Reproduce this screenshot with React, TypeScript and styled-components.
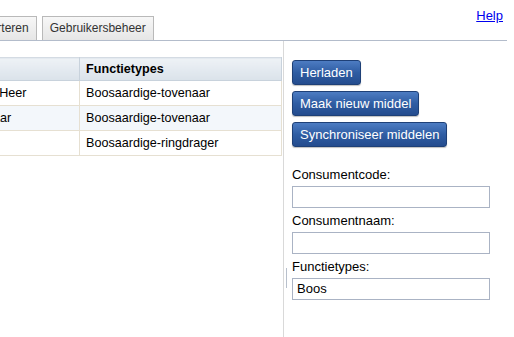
import React from 'react';
import styled, { createGlobalStyle } from 'styled-components';

const GlobalStyle = createGlobalStyle`
    html, body {
        margin:0;
        padding:0;
        background:#fff;
        overflow:hidden;
    }
    body {
        font-family:"Liberation Sans", Arial, sans-serif;
        font-size:13px;
        color:#000;
    }
`
const Page = styled.div`
    width:514px;
    height:337px;
    display:flex;
    flex-direction:column;
    overflow:hidden;
`
const TopBar = styled.div`
    height:40px;
    width:507px;
    border-bottom:1px solid #b3bccb;
    display:flex;
    justify-content:space-between;
    align-items:flex-start;
`
const Tabs = styled.div`
    display:flex;
    gap:5px;
    align-self:flex-end;
    margin-left:-38px;
`
const Tab = styled.div`
    height:23px;
    padding:0 7px;
    border:1px solid #b9b9b9;
    border-bottom:none;
    background:linear-gradient(#f7f7f7, #e6e6e6);
    font-size:12px;
    line-height:23px;
    color:#333;
`
const HelpLink = styled.a`
    margin-top:8px;
    margin-right:4px;
    color:#0000ee;
    text-decoration:underline;
    line-height:16px;
`
const Main = styled.div`
    flex:1;
    display:flex;
`
const LeftPanel = styled.div`
    width:283px;
    padding-top:16px;
    overflow:hidden;
    border-right:1px solid #d9d9d9;
`
const Grid = styled.table`
    margin-left:-40px;
    border-collapse:collapse;
    width:322px;
    font-size:12.6px;
`
const HeadCell = styled.th<{ w: number }>`
    width:${props => props.w}px;
    height:22px;
    padding:0 6px;
    text-align:left;
    font-weight:bold;
    background:linear-gradient(#eef2f6, #dae2ea);
    border:1px solid #c8d2dc;
    border-top-color:#d4dbe3;
`
const Row = styled.tr<{ alt?: boolean }>`
    background:${props => props.alt ? '#f3f7fb' : '#fff'};
`
const Cell = styled.td`
    height:24px;
    padding:0 6px;
    white-space:nowrap;
    border:1px solid #e6e0d2;
    border-top:none;
`
const RightPanel = styled.div`
    position:relative;
    flex:1;
    padding:19px 8px 0 8px;
    display:flex;
    flex-direction:column;
    align-items:flex-start;
    &::before{
        content:'';
        position:absolute;
        left:2px;
        top:227px;
        width:1px;
        height:20px;
        background:#b8c0cc;
    }
`
const Button = styled.button`
    height:25px;
    padding:0 7px;
    margin-bottom:6px;
    border:1px solid #1e4077;
    border-radius:3px;
    background:linear-gradient(#4d7cc2, #2f5da3 50%, #244c8e);
    box-shadow:0 1px 1px rgba(0,0,0,0.25);
    color:#fff;
    font-family:"Liberation Sans", Arial, sans-serif;
    font-size:13px;
    line-height:23px;
`
const Form = styled.div`
    margin-top:9px;
    display:flex;
    flex-direction:column;
`
const Label = styled.label`
    line-height:18px;
    margin-top:4px;
`
const Input = styled.div`
    width:188px;
    height:20px;
    margin-top:2px;
    padding:0 4px;
    border:1px solid #aab3c4;
    line-height:20px;
`

const rows = [
    { name: 'Witte Heer', type: 'Boosaardige-tovenaar' },
    { name: 'Dienaar', type: 'Boosaardige-tovenaar' },
    { name: '', type: 'Boosaardige-ringdrager' },
]

const fields = [
    { label: 'Consumentcode:', value: '' },
    { label: 'Consumentnaam:', value: '' },
    { label: 'Functietypes:', value: 'Boos' },
]

const App = () => {
    return(
        <Page>
            <GlobalStyle />
            <TopBar>
                <Tabs>
                    <Tab>Exporteren</Tab>
                    <Tab>Gebruikersbeheer</Tab>
                </Tabs>
                <HelpLink href="#">Help</HelpLink>
            </TopBar>
            <Main>
                <LeftPanel>
                    <Grid>
                        <thead>
                            <tr>
                                <HeadCell w={107}></HeadCell>
                                <HeadCell w={190}>Functietypes</HeadCell>
                            </tr>
                        </thead>
                        <tbody>
                            {rows.map((r, i) =>
                                <Row key={i} alt={i === 1}>
                                    <Cell>{r.name}</Cell>
                                    <Cell>{r.type}</Cell>
                                </Row>
                            )}
                        </tbody>
                    </Grid>
                </LeftPanel>
                <RightPanel>
                    <Button>Herladen</Button>
                    <Button>Maak nieuw middel</Button>
                    <Button>Synchroniseer middelen</Button>
                    <Form>
                        {fields.map(f =>
                            <React.Fragment key={f.label}>
                                <Label>{f.label}</Label>
                                <Input>{f.value}</Input>
                            </React.Fragment>
                        )}
                    </Form>
                </RightPanel>
            </Main>
        </Page>
    )
}

export default App;
